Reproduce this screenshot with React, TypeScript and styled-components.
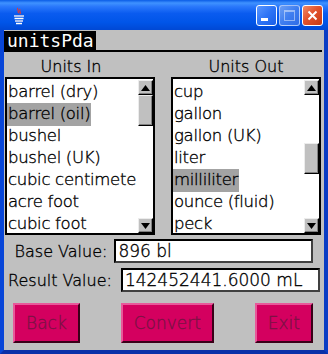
import React from 'react';
import styled, { createGlobalStyle } from 'styled-components';

const GlobalStyle = createGlobalStyle`
  html, body {
    margin: 0;
    padding: 0;
    background: #ffffff;
  }
  body {
    font-family: "DejaVu Sans", "Liberation Sans", sans-serif;
    font-weight: 200;
    -webkit-text-stroke: 0.35px #000000;
  }
`;

const Frame = styled.div`
  width: 328px;
  height: 354px;
  display: flex;
  flex-direction: column;
`;

const TitleBar = styled.div`
  height: 30px;
  flex: none;
  display: flex;
  align-items: center;
  padding: 1px 5px 0 8px;
  box-sizing: border-box;
  background: linear-gradient(
    to bottom,
    #0a5ce6 0%,
    #3f92ff 10%,
    #2a78fb 22%,
    #0a5bef 45%,
    #0055e8 75%,
    #0048d4 100%
  );
`;

const AppIcon = styled.svg`
  width: 16px;
  height: 18px;
  margin-left: 3px;
`;

const TitleSpacer = styled.div`
  flex: 1;
`;

const TitleButtons = styled.div`
  display: flex;
  gap: 2px;
`;

const WinButton = styled.div<{ $kind: 'min' | 'max' | 'close' }>`
  position: relative;
  width: 21px;
  height: 21px;
  box-sizing: border-box;
  border-radius: 3px;
  border: 1px solid ${(p) => (p.$kind === 'max' ? 'rgba(255,255,255,0.55)' : '#ffffff')};
  background: ${(p) =>
    p.$kind === 'close'
      ? 'linear-gradient(135deg, #f08a68 0%, #e2522c 45%, #c63a14 100%)'
      : p.$kind === 'max'
        ? 'linear-gradient(135deg, #6d9ff4 0%, #3f7ef0 50%, #2f6ce6 100%)'
        : 'linear-gradient(135deg, #5b97ff 0%, #2d74f6 50%, #1a5ee8 100%)'};
  display: flex;
  align-items: center;
  justify-content: center;
`;

const MinBar = styled.span`
  position: absolute;
  left: 4px;
  bottom: 4px;
  width: 7px;
  height: 3px;
  background: #ffffff;
`;

const MaxBox = styled.span`
  width: 9px;
  height: 8px;
  border: 1px solid rgba(255, 255, 255, 0.45);
  border-top-width: 2px;
`;

const WindowBody = styled.div`
  flex: 1;
  display: flex;
  flex-direction: column;
  background: #c0c0c0;
  border-left: 4px solid #0846d8;
  border-right: 4px solid #0a3cc4;
  border-bottom: 4px solid #0a30a8;
`;

const Header = styled.div`
  display: flex;
  margin: 1px 2px 0 0;
  border-bottom: 2px solid #000000;
`;

const HeaderTitle = styled.div`
  background: #000000;
  color: #ffffff;
  -webkit-text-stroke: 0;
  font-family: "DejaVu Sans Mono", monospace;
  font-weight: 400;
  font-size: 18px;
  line-height: 19px;
  height: 19px;
  padding: 0 2px 0 3px;
`;

const UnitsArea = styled.div`
  display: flex;
  gap: 16px;
  padding: 0 3px 0 1px;
  margin-top: 6px;
`;

const Column = styled.div`
  width: 150px;
  display: flex;
  flex-direction: column;
`;

const ColumnLabel = styled.div<{ $shift: number }>`
  height: 19px;
  line-height: 17px;
  font-size: 16px;
  text-align: center;
  color: #000000;
  padding-right: ${(p) => p.$shift}px;
`;

const ListBox = styled.div`
  height: 158px;
  box-sizing: border-box;
  border: 2px solid #000000;
  background: #ffffff;
  display: flex;
`;

const Items = styled.div`
  flex: 1;
  overflow: hidden;
  padding-top: 2px;
`;

const Item = styled.div`
  height: 22px;
  line-height: 22px;
  font-size: 16.5px;
  letter-spacing: -0.3px;
  white-space: nowrap;
  color: #000000;
`;

const ItemText = styled.span<{ $selected?: boolean }>`
  display: inline-block;
  padding: 0 1px 0 1px;
  height: 23px;
  background: ${(p) => (p.$selected ? '#a3a3a3' : 'transparent')};
`;

const ScrollBar = styled.div`
  width: 15px;
  display: flex;
  flex-direction: column;
  background: #ffffff;
`;

const ScrollPart = styled.div<{ $height: number }>`
  height: ${(p) => p.$height}px;
  flex: none;
  box-sizing: border-box;
  background: #c0c0c0;
  border-top: 1px solid #ececec;
  border-left: 1px solid #ececec;
  border-right: 1px solid #000000;
  border-bottom: 1px solid #000000;
  box-shadow: inset -1px -1px 0 #808080;
  display: flex;
  align-items: center;
  justify-content: center;
`;

const ScrollGap = styled.div<{ $height?: number }>`
  flex: ${(p) => (p.$height === undefined ? 1 : 'none')};
  height: ${(p) => (p.$height === undefined ? 'auto' : `${p.$height}px`)};
`;

const FormRow = styled.div<{ $gap: number; $top: number }>`
  display: flex;
  justify-content: center;
  align-items: center;
  gap: ${(p) => p.$gap}px;
  height: 24px;
  margin-top: ${(p) => p.$top}px;
`;

const FieldLabel = styled.span`
  font-size: 16px;
  color: #000000;
  white-space: nowrap;
`;

const Field = styled.input`
  width: 199px;
  height: 24px;
  box-sizing: border-box;
  margin: 0;
  padding: 0 2px;
  border-style: solid;
  border-width: 2px;
  border-color: #000000 #404040 #404040 #000000;
  background: #ffffff;
  font-family: "DejaVu Sans", sans-serif;
  font-weight: 200;
  -webkit-text-stroke: 0.35px #000000;
  font-size: 17px;
  color: #000000;
  outline: none;
`;

const ButtonRow = styled.div`
  display: flex;
  justify-content: space-between;
  padding: 0 11px 0 9px;
  margin-top: 11px;
`;

const PdaButton = styled.button`
  height: 40px;
  padding: 0 11px;
  margin: 0;
  background: #d4005f;
  border-style: solid;
  border-width: 2px;
  border-color: #e8589a #3a0018 #3a0018 #e8589a;
  color: #7a1244;
  -webkit-text-stroke: 0.3px #7a1244;
  font-family: "DejaVu Sans", sans-serif;
  font-weight: 200;
  font-size: 17px;
`;

const Arrow = ({ up }: { up?: boolean }) => (
  <svg width="9" height="6" viewBox="0 0 9 6">
    <polygon points={up ? '4.5,0 9,6 0,6' : '0,0 9,0 4.5,6'} fill="#000" />
  </svg>
);

type ListProps = {
  label: string;
  shift: number;
  items: string[];
  selected: string;
  thumbOffset: number;
};

const UnitList = ({ label, shift, items, selected, thumbOffset }: ListProps) => (
  <Column>
    <ColumnLabel $shift={shift}>{label}</ColumnLabel>
    <ListBox>
      <Items>
        {items.map((it) => (
          <Item key={it}>
            <ItemText $selected={it === selected}>{it}</ItemText>
          </Item>
        ))}
      </Items>
      <ScrollBar>
        <ScrollGap $height={1} />
        <ScrollPart $height={15}>
          <Arrow up />
        </ScrollPart>
        <ScrollGap $height={thumbOffset} />
        <ScrollPart $height={31} />
        <ScrollGap />
        <ScrollPart $height={15}>
          <Arrow />
        </ScrollPart>
      </ScrollBar>
    </ListBox>
  </Column>
);

const unitsIn = [
  'barrel (dry)',
  'barrel (oil)',
  'bushel',
  'bushel (UK)',
  'cubic centimete',
  'acre foot',
  'cubic foot',
];

const unitsOut = ['cup', 'gallon', 'gallon (UK)', 'liter', 'milliliter', 'ounce (fluid)', 'peck'];

export default function App() {
  return (
    <>
      <GlobalStyle />
      <Frame>
        <TitleBar>
          <AppIcon viewBox="0 0 16 18">
            <path d="M7 1 C5 3 9 4 7 6 M9 2 C7.5 4 10.5 5 9 7" stroke="#e03a3a" strokeWidth="1.2" fill="none" />
            <path d="M3 9 H13 M3.5 11.5 H12.5 M4 14 H12 M5 16.5 H11" stroke="#ffffff" strokeWidth="1.3" />
            <path d="M3 9 H13 M4 14 H12" stroke="#7a8dd8" strokeWidth="0.6" />
          </AppIcon>
          <TitleSpacer />
          <TitleButtons>
            <WinButton $kind="min">
              <MinBar />
            </WinButton>
            <WinButton $kind="max">
              <MaxBox />
            </WinButton>
            <WinButton $kind="close">
              <svg width="11" height="11" viewBox="0 0 11 11">
                <path d="M1.5 1.5 L9.5 9.5 M9.5 1.5 L1.5 9.5" stroke="#ffffff" strokeWidth="2" />
              </svg>
            </WinButton>
          </TitleButtons>
        </TitleBar>
        <WindowBody>
          <Header>
            <HeaderTitle>unitsPda</HeaderTitle>
          </Header>
          <UnitsArea>
            <UnitList label="Units In" shift={18} items={unitsIn} selected="barrel (oil)" thumbOffset={0} />
            <UnitList label="Units Out" shift={0} items={unitsOut} selected="milliliter" thumbOffset={48} />
          </UnitsArea>
          <FormRow $gap={7} $top={4}>
            <FieldLabel>Base Value:</FieldLabel>
            <Field readOnly value="896 bl" />
          </FormRow>
          <FormRow $gap={9} $top={5}>
            <FieldLabel>Result Value:</FieldLabel>
            <Field readOnly value="142452441.6000 mL" />
          </FormRow>
          <ButtonRow>
            <PdaButton>Back</PdaButton>
            <PdaButton>Convert</PdaButton>
            <PdaButton>Exit</PdaButton>
          </ButtonRow>
        </WindowBody>
      </Frame>
    </>
  );
}
